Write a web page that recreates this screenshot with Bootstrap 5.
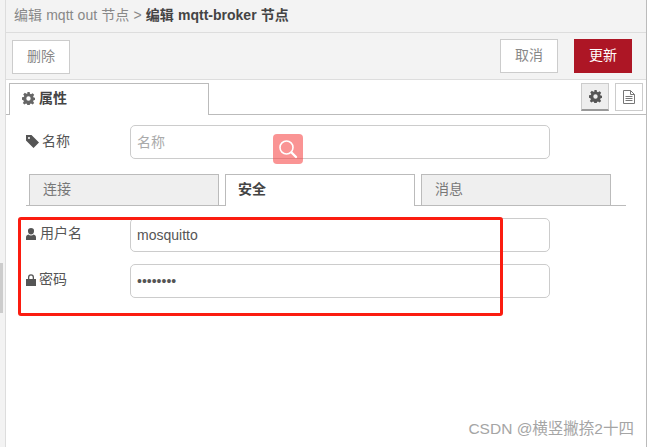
<!doctype html>
<html lang="zh">
<head>
    <meta charset="utf-8">
    <meta name="viewport" content="width=device-width, initial-scale=1">
    <title>编辑 mqtt-broker 节点</title>
    <link href="https://cdn.jsdelivr.net/npm/bootstrap@5.3.3/dist/css/bootstrap.min.css" rel="stylesheet">
    <style>
        html, body { height: 100%; overflow: hidden; }
        body {
            font-family: "Liberation Sans", "Noto Sans CJK SC", sans-serif;
            font-size: 14px;
            color: #555;
            background: #fff;
        }
        .tray-shell { width: 648px; height: 447px; position: relative; }
        .left-strip { width: 6px; background: #f3f3f3; border-right: 1px solid #ddd; position: relative; flex: none; }
        .left-grip { position: absolute; left: 0; top: 263px; width: 3px; height: 50px; background: #ccc; }
        .tray-body { width: 641px; flex: none; border-right: 1px solid #bbb; }
        .tray-title { height: 33px; background: #f3f3f3; border-bottom: 1px solid #ddd; padding: 5px 0 0 8px; line-height: 20px; color: #888; word-spacing: .3px; }
        .tray-title b { color: #444; }
        .tray-bar { height: 47px; background: #f3f3f3; border-bottom: 1px solid #ddd; padding: 6px 14px 0 6px; }
        .tray-btn { width: 58px; height: 34px; padding-bottom: 2px; background: #fff; border: 1px solid #ccc; color: #888; display: flex; align-items: center; justify-content: center; }
        .tray-btn.first { margin-top: 1px; }
        .tray-btn.primary { background: #ad1625; border-color: #ad1625; color: #fff; }
        .main-tabs { height: 35px; border-bottom: 1px solid #bbb; padding: 3px 3px 0 3px; }
        .main-tab { width: 200px; height: 32px; padding: 0 0 2px 12px; background: #fff; border: 1px solid #bbb; border-bottom: 0; font-weight: bold; color: #444; margin-bottom: -1px; }
        .side-btn { width: 28px; height: 28px; background: #fff; border: 1px solid #ccc; }
        .side-btn.on { background: #eee; border-bottom: 2px solid #999; margin-right: 6px; }
        .form-area { padding: 10px 0 0 20px; }
        .field-row { height: 34px; }
        .field-label { width: 104px; flex: none; display: flex; align-items: center; gap: 3px; height: 32px; color: #555; }
        .field-label.lift { height: 31px; }
        .field-label.wide { gap: 4px; }
        .field-input { width: 420px; height: 34px; border: 1px solid #ccc; border-radius: 5px; padding: 0 6px; color: #555; font-size: 14px; font-family: inherit; outline: 0; background: #fff; }
        .field-input::placeholder { color: #aaa; opacity: 1; }
        .sub-tabs { width: 600px; height: 32px; margin: 15px 0 12px 0; border-bottom: 1px solid #bbb; padding-left: 3px; gap: 6px; }
        .sub-tab { width: 190px; height: 32px; background: #efefef; border: 1px solid #bbb; padding: 0 0 2px 13px; color: #777; }
        .sub-tab.on { background: #fff; border-bottom: 0; color: #444; font-weight: bold; padding-left: 12px; }
        .gap-row { margin-top: 12px; }
        .red-box { position: absolute; left: 18px; top: 217px; width: 485px; height: 99px; border: 3px solid #fb1c10; border-radius: 3px; pointer-events: none; }
        .zoom-hint { position: absolute; left: 273px; top: 134px; width: 30px; height: 30px; border-radius: 4px; background: rgba(245, 60, 60, .55); display: flex; align-items: center; justify-content: center; }
        .wm-text { position: absolute; right: 14px; top: 419px; font-size: 15.5px; line-height: 20px; color: #a5a5a5; white-space: nowrap; }
    </style>
</head>
<body>
<div class="tray-shell d-flex">
    <div class="left-strip"><div class="left-grip"></div></div>
    <div class="tray-body d-flex flex-column">
        <div class="tray-title">编辑 mqtt out 节点 &gt; <b>编辑 mqtt-broker 节点</b></div>
        <div class="tray-bar d-flex">
            <div class="tray-btn first">删除</div>
            <div class="tray-btn ms-auto">取消</div>
            <div class="tray-btn primary ms-3">更新</div>
        </div>
        <div class="main-tabs d-flex">
            <div class="main-tab d-flex align-items-center gap-1">
                <svg width="13" height="13" viewBox="0 0 16 16"><path fill="#666" fill-rule="evenodd" d="M6.6 0h2.8l.4 2.2 1.3.6 1.9-1.3 2 2-1.3 1.9.6 1.3 2.2.4v2.8l-2.2.4-.6 1.3 1.3 1.9-2 2-1.9-1.3-1.3.6-.4 2.2H6.6l-.4-2.2-1.3-.6-1.9 1.3-2-2 1.3-1.9-.6-1.3L0 9.4V6.6l2.2-.4.6-1.3-1.3-1.9 2-2 1.9 1.3 1.3-.6zM8 5.3a2.7 2.7 0 1 0 0 5.4 2.7 2.7 0 0 0 0-5.4z"/></svg>
                属性
            </div>
            <div class="side-btn on ms-auto d-flex align-items-center justify-content-center">
                <svg width="13" height="13" viewBox="0 0 16 16"><path fill="#555" fill-rule="evenodd" d="M6.6 0h2.8l.4 2.2 1.3.6 1.9-1.3 2 2-1.3 1.9.6 1.3 2.2.4v2.8l-2.2.4-.6 1.3 1.3 1.9-2 2-1.9-1.3-1.3.6-.4 2.2H6.6l-.4-2.2-1.3-.6-1.9 1.3-2-2 1.3-1.9-.6-1.3L0 9.4V6.6l2.2-.4.6-1.3-1.3-1.9 2-2 1.9 1.3 1.3-.6zM8 5.3a2.7 2.7 0 1 0 0 5.4 2.7 2.7 0 0 0 0-5.4z"/></svg>
            </div>
            <div class="side-btn d-flex align-items-center justify-content-center">
                <svg width="12" height="14" viewBox="0 0 12 14"><path fill="none" stroke="#777" d="M.5.5h7l4 4v9H.5zM7.5.5v4h4M2.500 6.500h7M2.500 8.500h7M2.500 10.500h7"/></svg>
            </div>
        </div>
        <div class="form-area">
            <div class="field-row d-flex">
                <div class="field-label">
                    <svg width="13" height="13" viewBox="0 0 13 13"><path fill="#555" fill-rule="evenodd" d="M0 0h5.500L13 7.500 7.500 13 0 5.500zM3 2a1 1 0 1 0 0 2 1 1 0 0 0 0-2z"/></svg>
                    名称
                </div>
                <input class="field-input" type="text" placeholder="名称">
            </div>
            <div class="sub-tabs d-flex">
                <div class="sub-tab d-flex align-items-center">连接</div>
                <div class="sub-tab on d-flex align-items-center">安全</div>
                <div class="sub-tab d-flex align-items-center">消息</div>
            </div>
            <div class="field-row d-flex">
                <div class="field-label lift wide">
                    <svg width="10" height="12" viewBox="0 0 10 12"><path fill="#555" d="M5 0a3 3 0 0 1 3 3.200C8 5 7 6.400 5 6.400S2 5 2 3.200A3 3 0 0 1 5 0zM0 12V9.500C0 8 1 7 2.300 6.600 3 7.300 4 7.600 5 7.600s2-.3 2.700-1C9 7 10 8 10 9.500V12z"/></svg>
                    用户名
                </div>
                <input class="field-input" type="text" value="mosquitto">
            </div>
            <div class="field-row gap-row d-flex">
                <div class="field-label lift">
                    <svg width="10" height="12" viewBox="0 0 10 12"><path fill="#555" fill-rule="evenodd" d="M2 5V3.200a3 3 0 0 1 6 0V5h2v7H0V5zm1.300 0h3.400V3.200a1.700 1.700 0 0 0-3.400 0z"/></svg>
                    密码
                </div>
                <input class="field-input" type="password" value="mosquitt">
            </div>
        </div>
    </div>
    <div class="zoom-hint">
        <svg width="20" height="20" viewBox="0 0 20 20"><circle cx="8.500" cy="8.500" r="6.500" fill="none" stroke="#fff" stroke-width="1.600"/><path d="M13.500 13.500l4.500 4.500" stroke="#fff" stroke-width="2.400" stroke-linecap="round"/></svg>
    </div>
    <div class="red-box"></div>
    <div class="wm-text">CSDN @横竖撇捺2十四</div>
</div>
<script src="https://cdn.jsdelivr.net/npm/bootstrap@5.3.3/dist/js/bootstrap.bundle.min.js"></script>
</body>
</html>
